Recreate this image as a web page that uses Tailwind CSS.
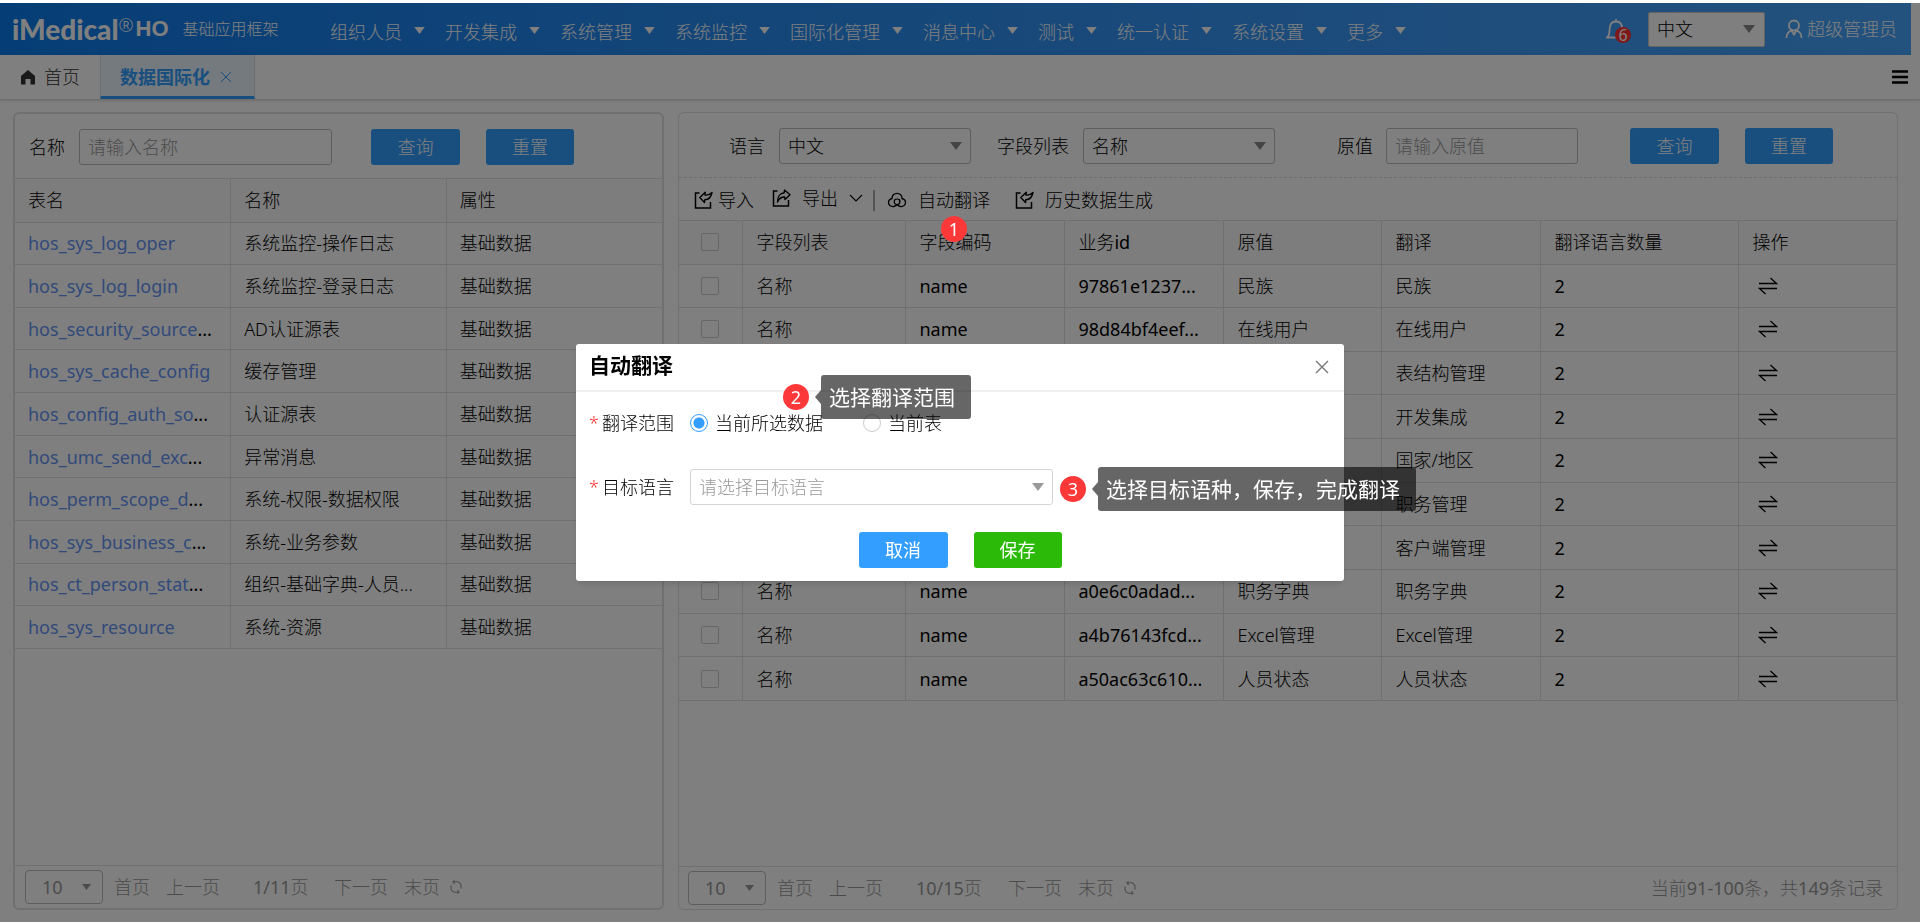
<!DOCTYPE html>
<html lang="zh-CN">
<head>
<meta charset="utf-8">
<title>数据国际化</title>
<script src="https://cdn.jsdelivr.net/npm/@tailwindcss/browser@4"></script>
</head>
<body class="h-screen overflow-hidden bg-white font-['Noto_Sans','Noto_Sans_CJK_SC',sans-serif] text-[18px] leading-6 font-light text-black">
<svg class="hidden" aria-hidden="true">
  <symbol id="i-import" viewBox="0 0 20 20"><path d="M6.500 3H2.500V18H17.500V12" fill="none" stroke="currentColor" stroke-width="1.500"/><path d="M19 2.500C16.500 5 14.500 5.500 12 5L12.300 2.300L6.800 7.500L11.500 12.500L11.800 9.800C15.500 9.800 18 7.500 19 2.500Z" fill="none" stroke="currentColor" stroke-width="1.400" stroke-linejoin="round"/></symbol>
  <symbol id="i-export" viewBox="0 0 20 20"><path d="M6.500 3H2.500V18H17.500V12" fill="none" stroke="currentColor" stroke-width="1.500"/><path d="M13.500 2L19 6.800L14 11.500L13.700 9C10.500 9 8 10.500 6.500 14C6.500 9 9 5 13.200 4.700Z" fill="none" stroke="currentColor" stroke-width="1.400" stroke-linejoin="round"/></symbol>
  <symbol id="i-cloud" viewBox="0 0 20 20"><path d="M6.500 16.500C3.500 16.800 1.500 15 1.500 12.500C1.500 10.500 3 9 5 8.500C5 5.500 7 3.300 10 3.300C13 3.300 15 5.500 15 8.500C17 9 18.500 10.500 18.500 12.500C18.500 15 16.500 16.800 13.500 16.500C12 16.300 11 15.800 10 14.800C9 15.800 8 16.300 6.500 16.500Z" fill="none" stroke="currentColor" stroke-width="1.300"/><circle cx="10" cy="11.800" r="2.800" fill="none" stroke="currentColor" stroke-width="1.200"/><path d="M12.500 9L13 12" stroke="currentColor" stroke-width="1.100"/></symbol>
  <symbol id="i-refresh" viewBox="0 0 14 14"><path d="M4 1.800H8A4 4 0 0 1 12 6V8.500M10 12.200H6A4 4 0 0 1 2 8V5.500M5.500 0.500L4 1.800L5.500 4M8.500 13.500L10 12.200L8.500 10" fill="none" stroke="currentColor" stroke-width="1.100"/></symbol>
  <symbol id="i-swap" viewBox="0 0 20 20"><path d="M1 7.500H18.500L12.500 2M19 12.500H1.500L7.500 18" fill="none" stroke="currentColor" stroke-width="1.300"/></symbol>
  <symbol id="i-caret" viewBox="0 0 12 8"><path d="M0 0H12L6 8Z" fill="currentColor"/></symbol>
</svg>

<div class="flex h-full flex-col pt-[3px]">
  <header class="mr-[9px] flex h-[52px] shrink-0 items-center bg-linear-to-r from-[#0a7cec] to-[#48a4fc] text-white">
    <div class="flex w-[330px] shrink-0 items-center pl-[12px]">
      <span class="font-['Lato'] text-[28px] font-black leading-8">iMedical</span>
      <span class="self-start text-[18px] leading-6">®</span>
      <span class="ml-[2px] font-['Liberation_Sans'] text-[22px] font-bold leading-8">HO</span>
      <span class="ml-[14px] text-[16px]">基础应用框架</span>
    </div>
    <nav class="flex flex-1 items-center gap-5 pt-[6px]" id="menu"></nav>
    <button type="button" aria-label="消息" class="relative mr-[22px] h-6 w-5">
      <svg class="h-[22px] w-5" viewBox="0 0 20 22"><path d="M1 19.500C3 18 3.500 16 3.500 12.500C3.500 7 5 3.500 10 3.500C15 3.500 16.500 7 16.500 12.500C16.500 16 17 18 19 19.500ZM10 3.500V1" fill="none" stroke="currentColor" stroke-width="1.800"/></svg>
      <span class="absolute top-[10px] left-[9px] flex h-4 w-4 items-center justify-center rounded-full bg-[#f33] text-[16px] leading-4 font-normal">6</span>
    </button>
    <div class="relative mr-5">
      <select aria-label="界面语言" class="h-[35px] w-[117px] appearance-none rounded-[2px] border border-[#c8c8c8] bg-white pl-2 text-black"><option>中文</option></select>
      <svg class="pointer-events-none absolute top-[13px] right-[10px] h-2 w-3 text-[#888]"><use href="#i-caret"/></svg>
    </div>
    <a href="#" class="mr-[14px] flex items-center gap-1">
      <svg class="h-5 w-[18px]" viewBox="0 0 18 20"><circle cx="9" cy="6.500" r="5" fill="none" stroke="currentColor" stroke-width="1.800"/><path d="M1.500 19C1.500 15 3.500 12.500 6.500 11.500L9 15.500L11.500 11.500C14.500 12.500 16.500 15 16.500 19" fill="none" stroke="currentColor" stroke-width="1.800"/></svg>
      <span>超级管理员</span>
    </a>
  </header>

  <div class="flex h-[45px] shrink-0 items-stretch border-b border-[#ddd] shadow-sm">
    <a href="#" class="flex w-[100px] items-center gap-2 pl-[20px] text-[#333]">
      <svg class="h-[15px] w-4" viewBox="0 0 16 15"><path d="M8 0L15 6V14.500H10.500V9H5.500V14.500H1V6Z" fill="#333"/></svg>
      首页
    </a>
    <div class="flex w-[155px] items-center gap-[10px] border-x border-b-[3px] border-x-[#d5dde2] border-b-[#339eff] bg-[#e9f4fb] pt-[3px] pl-[19px] font-bold text-[#339eff]">
      数据国际化
      <button type="button" aria-label="关闭标签" class="h-3 w-3"><svg class="h-3 w-3" viewBox="0 0 12 12"><path d="M1 1L11 11M11 1L1 11" stroke="currentColor" stroke-width="1"/></svg></button>
    </div>
    <button type="button" aria-label="菜单" class="mr-3 ml-auto"><svg class="h-[14px] w-4" viewBox="0 0 16 14"><path d="M0 1.500H16M0 7H16M0 12.500H16" stroke="#000" stroke-width="2.600"/></svg></button>
  </div>

  <main class="flex min-h-0 flex-1 gap-[14px] pt-3 pr-[22px] pb-[13px] pl-[13px]">
    <section class="flex min-w-0 flex-[649] flex-col rounded-md border-2 border-[#e0e0e0]">
      <form class="flex h-[65px] shrink-0 items-center border-b border-[#e0e0e0] pt-[2px] pl-[14px]">
        <label for="q-name">名称</label>
        <input id="q-name" placeholder="请输入名称" class="ml-[14px] h-9 w-[253px] rounded-[3px] border border-[#bbb] px-2 placeholder:text-[#999]">
        <button type="button" class="ml-[39px] h-9 w-[89px] rounded-[3px] bg-[#339eff] text-white">查询</button>
        <button type="button" class="ml-[26px] h-9 w-[88px] rounded-[3px] bg-[#339eff] text-white">重置</button>
      </form>
      <table class="h-[470px] w-full table-fixed border-collapse text-left">
        <thead><tr class="h-[43px] bg-[#fafafa]">
          <th class="border-r border-b border-[#e0e0e0] pl-[13px] font-light">表名</th>
          <th class="border-r border-b border-[#e0e0e0] pl-[13px] font-light">名称</th>
          <th class="border-b border-[#e0e0e0] pl-[13px] font-light">属性</th>
        </tr></thead>
        <tbody id="tables"></tbody>
      </table>
      <footer class="mt-auto flex h-[43px] shrink-0 items-center border-t border-[#e0e0e0] pl-[10px] text-[#999]">
        <div class="relative">
          <select aria-label="每页条数" class="block h-[34px] w-[78px] appearance-none rounded-[4px] border border-[#bbb] pl-4 font-normal"><option>10</option></select>
          <svg class="pointer-events-none absolute top-[14px] right-[12px] h-[6px] w-[9px]"><use href="#i-caret"/></svg>
        </div>
        <a href="#" class="ml-[11px]">首页</a>
        <a href="#" class="ml-4">上一页</a>
        <span class="ml-[33px] w-[57px] whitespace-nowrap"><span class="font-normal">1/11</span>页</span>
        <a href="#" class="ml-6">下一页</a>
        <a href="#" class="ml-4">末页</a>
        <button type="button" aria-label="刷新" class="ml-[9px]"><svg class="h-[14px] w-[14px]"><use href="#i-refresh"/></svg></button>
      </footer>
    </section>

    <section class="flex min-w-0 flex-[1222] flex-col rounded-md border border-[#e0e0e0]">
      <form class="flex h-[65px] shrink-0 items-center border-b border-dashed border-[#ddd] pt-[2px] pl-[50px]">
        <label for="q-lang">语言</label>
        <div class="relative ml-[14px]">
          <select id="q-lang" class="block h-9 w-[192px] appearance-none rounded-[3px] border border-[#bbb] pl-2"><option>中文</option></select>
          <svg class="pointer-events-none absolute top-[14px] right-[9px] h-2 w-3 text-[#888]"><use href="#i-caret"/></svg>
        </div>
        <label for="q-field" class="ml-[26px]">字段列表</label>
        <div class="relative ml-[14px]">
          <select id="q-field" class="block h-9 w-[192px] appearance-none rounded-[3px] border border-[#bbb] pl-2"><option>名称</option></select>
          <svg class="pointer-events-none absolute top-[14px] right-[9px] h-2 w-3 text-[#888]"><use href="#i-caret"/></svg>
        </div>
        <label for="q-value" class="ml-[62px]">原值</label>
        <input id="q-value" placeholder="请输入原值" class="ml-[13px] h-9 w-[192px] rounded-[3px] border border-[#bbb] px-2 placeholder:text-[#999]">
        <button type="button" class="ml-[52px] h-9 w-[89px] rounded-[3px] bg-[#339eff] text-white">查询</button>
        <button type="button" class="ml-[26px] h-9 w-[88px] rounded-[3px] bg-[#339eff] text-white">重置</button>
      </form>
      <div class="flex h-[43px] shrink-0 items-center border-b border-[#e0e0e0] pt-[2px] pl-[14px]">
        <button type="button" class="flex items-center gap-[5px]"><svg class="h-5 w-5"><use href="#i-import"/></svg>导入</button>
        <button type="button" class="ml-[17px] flex items-center gap-[11px] pb-1"><svg class="h-5 w-5"><use href="#i-export"/></svg>导出<svg class="h-4 w-[14px]" viewBox="0 0 14 16"><path d="M1 5L7 11L13 5" fill="none" stroke="currentColor" stroke-width="1.100"/></svg></button>
        <span class="ml-[10px] h-[21px] w-[2px] bg-[#aaa]"></span>
        <button type="button" class="ml-3 flex items-center gap-[11px]"><svg class="h-5 w-5"><use href="#i-cloud"/></svg>自动翻译</button>
        <button type="button" class="ml-6 flex items-center gap-[11px]"><svg class="h-5 w-5"><use href="#i-import"/></svg>历史数据生成</button>
      </div>
      <table class="h-[480px] w-full table-fixed border-collapse text-left">
        <colgroup><col class="w-[64px]"><col class="w-[163px]"><col class="w-[159px]"><col class="w-[159px]"><col class="w-[158px]"><col class="w-[159px]"><col class="w-[198px]"><col></colgroup>
        <thead><tr class="h-[43px] bg-[#fafafa]">
          <th class="border-r border-b border-[#e0e0e0] pl-[22px] align-middle"><input type="checkbox" aria-label="全选" class="block h-[18px] w-[18px] appearance-none rounded-[2px] border border-[#ccc]"></th>
          <th class="border-r border-b border-[#e0e0e0] pl-[13px] font-light">字段列表</th>
          <th class="border-r border-b border-[#e0e0e0] pl-[13px] font-light">字段编码</th>
          <th class="border-r border-b border-[#e0e0e0] pl-[13px] font-light">业务<span class="font-normal">id</span></th>
          <th class="border-r border-b border-[#e0e0e0] pl-[13px] font-light">原值</th>
          <th class="border-r border-b border-[#e0e0e0] pl-[13px] font-light">翻译</th>
          <th class="border-r border-b border-[#e0e0e0] pl-[13px] font-light">翻译语言数量</th>
          <th class="border-r border-b border-[#e0e0e0] pl-[13px] font-light">操作</th>
        </tr></thead>
        <tbody id="values"></tbody>
      </table>
      <footer class="mt-auto flex h-[43px] shrink-0 items-center border-t border-[#e0e0e0] pr-[14px] pl-[9px] text-[#999]">
        <div class="relative">
          <select aria-label="每页条数" class="block h-[34px] w-[78px] appearance-none rounded-[4px] border border-[#bbb] pl-4 font-normal"><option>10</option></select>
          <svg class="pointer-events-none absolute top-[14px] right-[12px] h-[6px] w-[9px]"><use href="#i-caret"/></svg>
        </div>
        <a href="#" class="ml-[11px]">首页</a>
        <a href="#" class="ml-4">上一页</a>
        <span class="ml-[33px] w-[68px] whitespace-nowrap"><span class="font-normal">10/15</span>页</span>
        <a href="#" class="ml-6">下一页</a>
        <a href="#" class="ml-4">末页</a>
        <button type="button" aria-label="刷新" class="ml-[9px]"><svg class="h-[14px] w-[14px]"><use href="#i-refresh"/></svg></button>
        <span class="ml-auto">当前<span class="font-normal">91-100</span>条，共<span class="font-normal">149</span>条记录</span>
      </footer>
    </section>
  </main>
</div>

<div class="fixed inset-x-0 top-[3px] bottom-px flex items-center justify-center bg-black/50">
  <div role="dialog" aria-labelledby="dlg-title" class="relative h-[237px] w-[768px] rounded-[3px] bg-white shadow-md">
    <div class="flex h-[48px] items-center justify-between border-b-2 border-[#f0f0f0] pr-[15px] pl-[13px]">
      <h2 id="dlg-title" class="pb-1 text-[21px] font-bold">自动翻译</h2>
      <button type="button" aria-label="关闭"><svg class="h-[14px] w-[14px]" viewBox="0 0 14 14"><path d="M1 1L13 13M13 1L1 13" stroke="#777" stroke-width="1.400"/></svg></button>
    </div>
    <div class="flex h-[62px] items-center pl-[13px]">
      <span class="mr-[6px] w-[7px] text-[#f33]">*</span><span>翻译范围</span>
      <label class="ml-4 flex items-center gap-[7px]"><input type="radio" name="range" checked class="h-[18px] w-[18px] appearance-none rounded-full border border-[#339eff] bg-[radial-gradient(circle,#339eff_5px,#ffffff_6px)]">当前所选数据</label>
      <label class="ml-[40px] flex items-center gap-[7px]"><input type="radio" name="range" class="h-[18px] w-[18px] appearance-none rounded-full border border-[#ccc]">当前表</label>
    </div>
    <div class="flex h-[66px] items-center pl-[13px]">
      <span class="mr-[6px] w-[7px] text-[#f33]">*</span><label for="target">目标语言</label>
      <div class="relative ml-4">
        <select id="target" class="block h-9 w-[363px] appearance-none rounded-[3px] border border-[#d5d5d5] pl-2 text-[#999]"><option>请选择目标语言</option></select>
        <svg class="pointer-events-none absolute top-[14px] right-[9px] h-2 w-3 text-[#999]"><use href="#i-caret"/></svg>
      </div>
    </div>
    <div class="flex justify-center gap-[26px] pt-3">
      <button type="button" class="h-9 w-[89px] rounded-[3px] bg-[#339eff] font-normal text-white">取消</button>
      <button type="button" class="h-9 w-[88px] rounded-[3px] bg-[#2aba07] font-normal text-white">保存</button>
    </div>

    <span class="absolute top-[40px] left-[207px] flex h-[26px] w-[26px] items-center justify-center rounded-full bg-[#fd3838] text-[18px] font-normal text-white">2</span>
    <div class="absolute top-[31px] left-[239px] flex items-center">
      <span class="border-y-[7px] border-r-[6px] border-y-transparent border-r-black/60"></span>
      <span class="flex h-[44px] w-[150px] items-center rounded-[3px] bg-black/60 pl-2 text-[21px] font-normal whitespace-nowrap text-white">选择翻译范围</span>
    </div>
    <span class="absolute top-[132px] left-[484px] flex h-[26px] w-[26px] items-center justify-center rounded-full bg-[#fd3838] text-[18px] font-normal text-white">3</span>
    <div class="absolute top-[123px] left-[516px] flex items-center">
      <span class="border-y-[7px] border-r-[6px] border-y-transparent border-r-black/60"></span>
      <span class="flex h-[44px] w-[318px] items-center rounded-[3px] bg-black/60 pl-2 text-[21px] font-normal whitespace-nowrap text-white">选择目标语种，保存，完成翻译</span>
    </div>
  </div>
  <span class="absolute top-[213px] left-[941px] flex h-[26px] w-[26px] items-center justify-center rounded-full bg-[#fd3838] text-[18px] font-normal text-white">1</span>
</div>

<script>
const menu = ['组织人员','开发集成','系统管理','系统监控','国际化管理','消息中心','测试','统一认证','系统设置','更多'];
document.getElementById('menu').innerHTML = menu.map(m =>
  `<a href="#" class="flex items-center gap-3 whitespace-nowrap">${m}<svg class="mb-1 h-[7px] w-[11px]"><use href="#i-caret"/></svg></a>`).join('');

const tables = [
  ['hos_sys_log_oper','','系统监控-操作日志'],
  ['hos_sys_log_login','','系统监控-登录日志'],
  ['hos_security_source','...','AD认证源表'],
  ['hos_sys_cache_config','','缓存管理'],
  ['hos_config_auth_so','...','认证源表'],
  ['hos_umc_send_exc','...','异常消息'],
  ['hos_perm_scope_d','...','系统-权限-数据权限'],
  ['hos_sys_business_c','...','系统-业务参数'],
  ['hos_ct_person_stat','...','组织-基础字典-人员...'],
  ['hos_sys_resource','','系统-资源']
];
document.getElementById('tables').innerHTML = tables.map(([code, dots, name]) => `<tr>
  <td class="overflow-hidden border-r border-b border-[#e0e0e0] pl-[13px] font-normal whitespace-nowrap"><a href="#" class="text-[#6594f5]">${code}</a>${dots}</td>
  <td class="overflow-hidden border-r border-b border-[#e0e0e0] pl-[13px] whitespace-nowrap">${name}</td>
  <td class="border-b border-[#e0e0e0] pl-[13px]">基础数据</td></tr>`).join('');

const values = [
  ['97861e1237...','民族'],['98d84bf4eef...','在线用户'],['9a02c7be11...','表结构管理'],['9b3d51fe08...','开发集成'],
  ['9c7708aa3e...','国家/地区'],['9d1f46c2b7...','职务管理'],['9f80e3d95a...','客户端管理'],['a0e6c0adad...','职务字典'],
  ['a4b76143fcd...','Excel管理'],['a50ac63c610...','人员状态']
];
document.getElementById('values').innerHTML = values.map(([id, v]) => `<tr>
  <td class="border-r border-b border-[#e0e0e0] pl-[22px]"><input type="checkbox" aria-label="选择${v}" class="block h-[18px] w-[18px] appearance-none rounded-[2px] border border-[#ccc]"></td>
  <td class="border-r border-b border-[#e0e0e0] pl-[13px]">名称</td>
  <td class="border-r border-b border-[#e0e0e0] pl-[13px] font-normal">name</td>
  <td class="overflow-hidden border-r border-b border-[#e0e0e0] pl-[13px] font-normal whitespace-nowrap">${id}</td>
  <td class="border-r border-b border-[#e0e0e0] pl-[13px]">${v}</td>
  <td class="border-r border-b border-[#e0e0e0] pl-[13px]">${v}</td>
  <td class="border-r border-b border-[#e0e0e0] pl-[13px] font-normal">2</td>
  <td class="border-r border-b border-[#e0e0e0] pl-[19px]"><button type="button" aria-label="翻译${v}" class="block"><svg class="h-5 w-5"><use href="#i-swap"/></svg></button></td></tr>`).join('');
</script>
</body>
</html>
